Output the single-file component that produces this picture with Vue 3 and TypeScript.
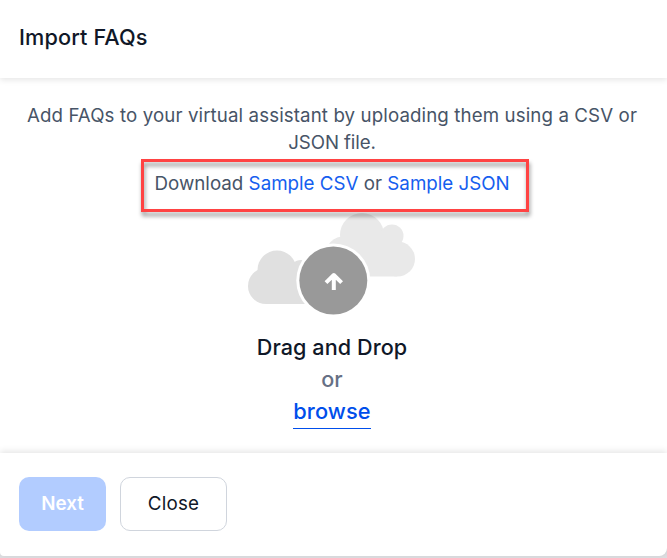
<script setup lang="ts">
const title: string = 'Import FAQs'
const description: string[] = [
  'Add FAQs to your virtual assistant by uploading them using a CSV or',
  'JSON file.',
]
</script>

<template>
  <main class="page">
    <section class="dialog">
      <header class="header">
        <h1 class="title">{{ title }}</h1>
      </header>
      <div class="body">
        <p class="description">
          <span v-for="line in description" :key="line" class="line">{{ line }}</span>
        </p>
        <div class="samples">
          <span class="samples-text">Download <a class="link">Sample CSV</a> or <a class="link">Sample JSON</a></span>
        </div>
        <svg class="clouds" width="170" height="106" viewBox="247 211 170 106">
          <g fill="#e9e9e9">
            <circle cx="362" cy="235" r="22" />
            <circle cx="392" cy="236" r="11.5" />
            <circle cx="397.5" cy="259" r="17.5" />
            <circle cx="345" cy="256" r="20" />
            <rect x="345" y="237" width="52" height="39.5" />
          </g>
          <g fill="#e0e0e0">
            <circle cx="277" cy="270" r="19.5" />
            <circle cx="301" cy="271" r="11" />
            <circle cx="266" cy="286" r="18" />
            <rect x="266" y="270" width="60" height="34" />
          </g>
          <circle cx="333.3" cy="280.5" r="37" fill="#fff" />
          <circle cx="333.3" cy="280.5" r="34" fill="#999" />
          <path d="M326 282.7L333.8 275L341.6 282.7M333.8 276V290" fill="none" stroke="#fff" stroke-width="4" stroke-linejoin="round" />
        </svg>
        <div class="drop">Drag and Drop</div>
        <div class="or">or</div>
        <a class="browse">browse</a>
      </div>
      <footer class="footer">
        <button class="button next" type="button" disabled>Next</button>
        <button class="button close" type="button">Close</button>
      </footer>
    </section>
  </main>
</template>

<style>
body {
  background: #dcdde0;
  overflow: hidden;
}
</style>

<style scoped>
.page {
  height: 558px;
  font-family: Inter, "Liberation Sans", sans-serif;
  color: #101828;
}
.dialog {
  display: flex;
  flex-direction: column;
  height: 556px;
  background: #fff;
  border-radius: 0 0 8px 4px;
}
.header {
  box-sizing: border-box;
  height: 78px;
  padding: 22px 19px 0;
  box-shadow: 0 2px 6px rgba(0, 0, 0, 0.1);
}
.title {
  margin: 0;
  font-size: 21.7px;
  line-height: 30px;
  font-weight: 550;
  letter-spacing: 0.12px;
}
.body {
  box-sizing: border-box;
  height: 375px;
  padding: 24px 3px 0 0;
  display: flex;
  flex-direction: column;
  align-items: center;
}
.description {
  margin: 0;
  font-size: 18.7px;
  line-height: 27px;
  color: #475467;
  text-align: center;
  white-space: nowrap;
}
.line {
  display: block;
}
.line:first-child {
  letter-spacing: 0.11px;
}
.line:last-child {
  letter-spacing: -0.1px;
}
.samples {
  position: relative;
  box-sizing: border-box;
  width: 388px;
  height: 53px;
  margin: 3px 0 0 5px;
  padding: 3px 0 0 14px;
  font-size: 18.75px;
  line-height: 44px;
  color: #475467;
  white-space: nowrap;
}
.samples::before {
  content: "";
  position: absolute;
  z-index: 1;
  inset: 0;
  border: 3px solid #ff4343;
  filter: drop-shadow(1px 4px 2px rgba(0, 0, 0, 0.42));
}
.samples-text {
  position: relative;
}
.link {
  color: #155eef;
}
.clouds {
  display: block;
  flex: none;
  margin-top: -1px;
}
.drop,
.or,
.browse {
  font-size: 21.6px;
  line-height: 32px;
  font-weight: 550;
  letter-spacing: 0.08px;
}
.drop {
  margin-top: 14px;
}
.or {
  color: #667085;
}
.browse {
  color: #004eeb;
  font-size: 21.8px;
  line-height: 33px;
  border-bottom: 1px solid #004eeb;
}
.footer {
  flex: 1;
  display: flex;
  gap: 14px;
  padding: 24px 19px 0;
  border-radius: 0 0 8px 4px;
  box-shadow: 0 -2px 6px rgba(0, 0, 0, 0.1);
}
.button {
  box-sizing: border-box;
  height: 54px;
  padding: 0 0 2px;
  border-radius: 10px;
  font-family: inherit;
  font-size: 18.8px;
}
.next {
  width: 87px;
  border: 0;
  background: #b2ccff;
  color: #fff;
  font-weight: 600;
}
.close {
  width: 107px;
  border: 1px solid #d0d5dd;
  background: #fff;
  color: #101828;
  letter-spacing: 0.2px;
}
</style>
